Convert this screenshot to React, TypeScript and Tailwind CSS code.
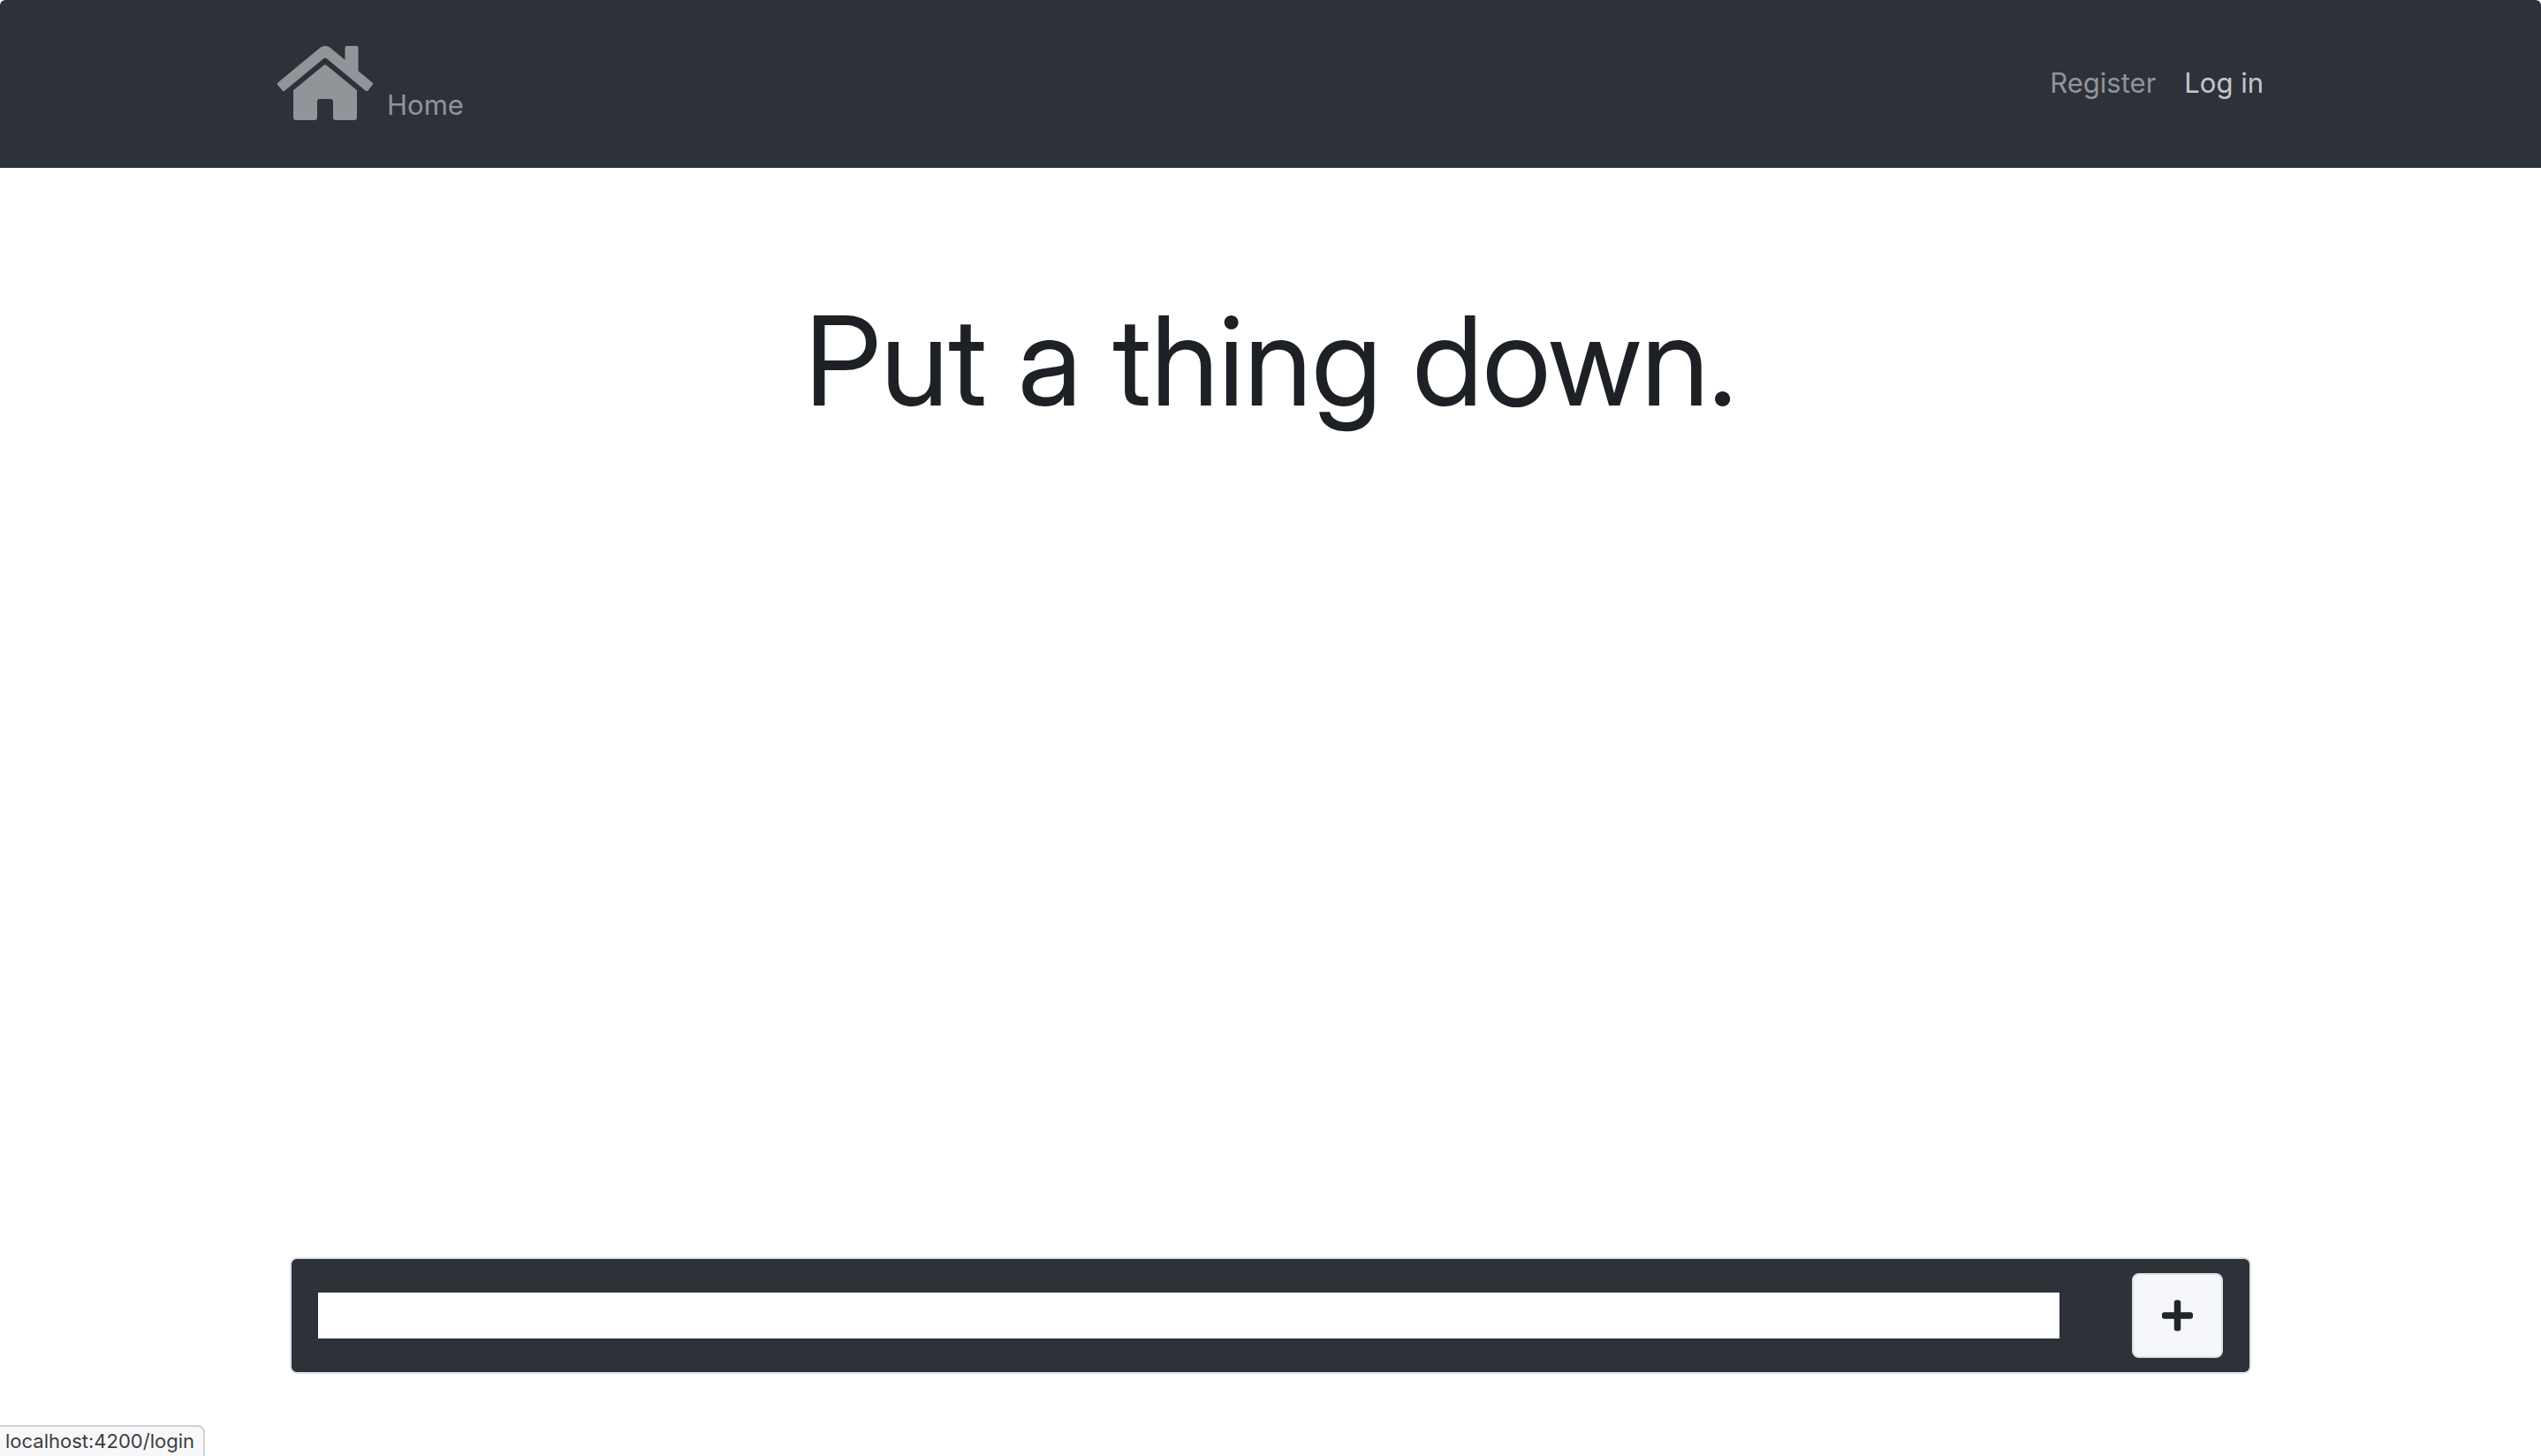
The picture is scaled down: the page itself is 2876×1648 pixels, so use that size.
import { FaHome, FaPlus } from "react-icons/fa";

export default function App() {
  return (
    <div className="flex min-h-screen flex-col bg-white font-['Inter','Liberation_Sans',sans-serif] text-[#212529]">
      <header className="rounded-t-md bg-[#2d3239]">
        <nav
          aria-label="Main"
          className="mx-auto flex max-w-[2248px] items-center justify-between pt-[46px] pb-12 text-[31px] leading-[46px]"
        >
          <a href="#home" className="flex items-end gap-4 text-[#919499]">
            <FaHome className="h-24 w-[108px]" aria-hidden="true" />
            <span>Home</span>
          </a>
          <div className="flex gap-8">
            <a href="#register" className="text-[#919499]">
              Register
            </a>
            <a href="#login" className="text-[#c5c6c9]">
              Log in
            </a>
          </div>
        </nav>
      </header>

      <main className="mx-auto flex w-full max-w-[2220px] grow flex-col justify-between pt-[134px] pb-[93px]">
        <h1 className="text-center font-['Inter_Display','Inter',sans-serif] text-[140px] leading-[168px] font-normal text-[#1d2025]">
          Put a thing down.
        </h1>
        <form
          className="flex items-center gap-[82px] rounded-lg border-2 border-[#dee2e6] bg-[#2d3239] px-[30px] py-4"
          onSubmit={(event) => event.preventDefault()}
        >
          <input
            type="text"
            aria-label="Thing"
            className="h-[52px] min-w-0 grow bg-white px-1 text-[31px] outline-none"
          />
          <button
            type="submit"
            aria-label="Add"
            className="flex h-24 w-[103px] items-center justify-center rounded-lg border-2 border-[#dae0e5] bg-[#f6f7fb] text-[#212529]"
          >
            <FaPlus className="h-10 w-[35px]" aria-hidden="true" />
          </button>
        </form>
      </main>

      <div className="fixed bottom-0 left-0 rounded-tr-lg border-t-2 border-r-2 border-[#d0d0d0] bg-[#f8f8fa] pr-2.5 pl-1.5 text-[22px] leading-[33px] text-[#3c3d40]">
        localhost:4200/login
      </div>
    </div>
  );
}
